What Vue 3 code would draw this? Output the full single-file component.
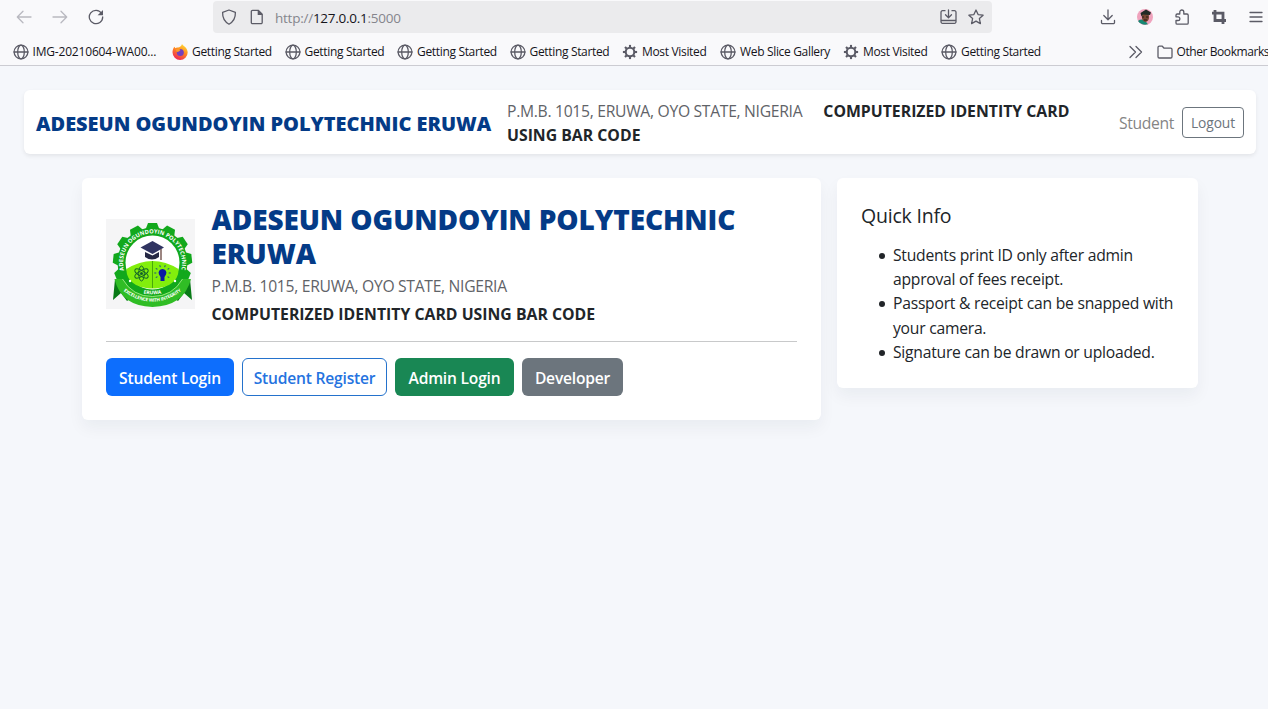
<script setup>
const bookmarks = [
  { x: 'b0', icon: 'globe', label: 'IMG-20210604-WA00...' },
  { x: 'b1', icon: 'fox', label: 'Getting Started' },
  { x: 'b2', icon: 'globe', label: 'Getting Started' },
  { x: 'b3', icon: 'globe', label: 'Getting Started' },
  { x: 'b4', icon: 'globe', label: 'Getting Started' },
  { x: 'b5', icon: 'gear', label: 'Most Visited' },
  { x: 'b6', icon: 'globe', label: 'Web Slice Gallery' },
  { x: 'b7', icon: 'gear', label: 'Most Visited' },
  { x: 'b8', icon: 'globe', label: 'Getting Started' },
]
const teeth = Array.from({ length: 11 }, (_, i) => (i - 5) * 28)
const rays = [-125, -90, -55, -20, 20, 55, 90, 125]
</script>

<template>
  <div class="page">
    <header class="chrome">
      <div class="toolbar">
        <svg class="ic nav back" viewBox="0 0 16 16"><path d="M15 8H1.500M7 2.200 1.300 8 7 13.800" /></svg>
        <svg class="ic nav fwd" viewBox="0 0 16 16"><path d="M1 8h13.500M9 2.200 14.700 8 9 13.800" /></svg>
        <svg class="ic reload" viewBox="0 0 16 16"><path d="M13.600 4.300A6.700 6.700 0 1 0 14.700 8" /><path class="fill" d="M15 1v5.200H9.600z" /></svg>
        <div class="urlbar">
          <svg class="ic" viewBox="0 0 16 16"><path d="M8 1 14.400 3.300C14.600 8.700 12.400 12.800 8 15.200 3.600 12.800 1.400 8.700 1.600 3.300z" /></svg>
          <svg class="ic doc" viewBox="0 0 16 16"><path d="M3.500 1.300h5.700l4 4v8.200a1.200 1.200 0 0 1-1.200 1.200H3.500a1.200 1.200 0 0 1-1.200-1.200v-11a1.200 1.200 0 0 1 1.200-1.200z" /><path class="fill" d="M8.700 1l5 5h-5z" /></svg>
          <span class="url">http://<b>127.0.0.1</b>:5000</span>
          <svg class="ic save" viewBox="0 0 17 16"><path d="M5 1.700H2.500A1.500 1.500 0 0 0 1 3.200v9.600a1.500 1.500 0 0 0 1.500 1.500h12a1.500 1.500 0 0 0 1.500-1.500V3.200a1.500 1.500 0 0 0-1.500-1.500H12M1 11.500h15M8.500 1v7.500M5.500 5.700l3 3 3-3" /></svg>
          <svg class="ic" viewBox="0 0 16 16"><path d="M8 1l2.100 4.600 5 .6-3.700 3.400 1 5L8 12.100l-4.400 2.500 1-5L.9 6.200l5-.6z" /></svg>
        </div>
        <div class="actions">
          <svg class="ic" viewBox="0 0 16 16"><path d="M8 1v9.500M3.800 6.500 8 10.700l4.200-4.200M1.500 11.500v2a1.200 1.200 0 0 0 1.200 1.200h10.600a1.200 1.200 0 0 0 1.200-1.200v-2" /></svg>
          <svg class="avatar" viewBox="0 0 16 16">
            <circle cx="8" cy="8" r="8" fill="#f0a3bd" />
            <path d="M1 12q5-4 10 3.300Q5 17 1 12" fill="#168873" />
            <ellipse cx="8.500" cy="8" rx="3.600" ry="5" fill="#764632" />
            <path d="M3.500 4 9 .5l5 3-1 2.500-7-.5-1.500 2z" fill="#222b26" />
            <path d="M5 8h2M9 8h2M7 11h3" stroke="#2b1c18" />
          </svg>
          <svg class="ic" viewBox="0 0 16 16"><path d="M2 7.800V6.200A1.200 1.200 0 0 1 3.200 5h2.600V3a2 2 0 0 1 4 0v2H13a1.200 1.200 0 0 1 1.200 1.200v7.800a1.200 1.200 0 0 1-1.200 1.200H3.200A1.200 1.200 0 0 1 2 14v-2.500h2a1.800 1.800 0 0 0 0-3.700z" /></svg>
          <svg class="ic crop" viewBox="0 0 16 16"><path d="M4 1v10.500h11M1 4.200h11V15" /></svg>
          <svg class="ic" viewBox="0 0 16 16"><path d="M2 3.500h12M2 8h12M2 12.500h12" /></svg>
        </div>
      </div>
      <nav class="bookmarks">
        <span v-for="b in bookmarks" :key="b.x" class="bm" :class="b.x">
          <svg v-if="b.icon === 'globe'" class="ic" viewBox="0 0 16 16"><circle cx="8" cy="8" r="6.900" /><ellipse cx="8" cy="8" rx="3.300" ry="6.900" /><path d="M1 8h14" /></svg>
          <svg v-else-if="b.icon === 'gear'" class="ic gear" viewBox="0 0 16 16"><circle cx="8" cy="8" r="4.300" /><path v-for="n in 8" :key="n" d="M8 3.400V.9" :transform="`rotate(${n * 45} 8 8)`" /></svg>
          <svg v-else class="fox" viewBox="0 0 16 16">
            <defs><linearGradient id="flame" x1=".8" y1="0" x2=".3" y2="1"><stop offset="0" stop-color="#ffe437" /><stop offset=".45" stop-color="#ff8a20" /><stop offset="1" stop-color="#ef2258" /></linearGradient></defs>
            <path fill="url(#flame)" d="M10 0c1 2 5.500 3.500 5.700 8.300A7.600 7.600 0 0 1 .5 8.300c0-2.300.8-4.300 2-5.600l.8 1.500C4 3.500 5 3.300 6 3.500 7.500 3.200 9.500 2.500 10 0z" />
            <circle cx="8.300" cy="8.500" r="3.500" fill="#7440bd" />
            <path d="M3.500 5.500q3-1.500 5 .5Q7 8 5 8z" fill="#ff9a25" />
          </svg>
          <span>{{ b.label }}</span>
        </span>
        <svg class="ic more" viewBox="0 0 16 16"><path d="M2 2.500 7.500 8 2 13.500M8 2.500 13.500 8 8 13.500" /></svg>
        <span class="bm other"><svg class="ic" viewBox="0 0 16 16"><path d="M1 12.700V3.500A1.300 1.300 0 0 1 2.300 2.200h3l1.800 2h6.600A1.300 1.300 0 0 1 15 5.500v7.200a1.300 1.300 0 0 1-1.300 1.300H2.300A1.300 1.300 0 0 1 1 12.700z" /></svg><span>Other Bookmarks</span></span>
      </nav>
    </header>

    <section class="navbar">
      <strong class="brand">ADESEUN OGUNDOYIN POLYTECHNIC ERUWA</strong>
      <div class="tagline"><span class="addr">P.M.B. 1015, ERUWA, OYO STATE, NIGERIA</span><b class="sub">COMPUTERIZED IDENTITY CARD</b><br /><b class="using">USING BAR CODE</b></div>
      <div class="account"><span class="role">Student</span><button class="logout">Logout</button></div>
    </section>

    <main class="content">
      <section class="card hero">
        <div class="intro">
          <svg class="logo" viewBox="0 0 89 90">
            <defs>
              <path id="ring" d="M18 51.500A29.500 29.500 0 1 1 75 51.500" />
              <path id="ribbon" d="M15 70Q46.500 95.500 78 70" />
              <path id="foot" d="M31 73.500Q46.500 77 62 73.500" />
            </defs>
            <rect width="89" height="90" fill="#f5f5f6" />
            <path d="M9 60 7 81l8-7 6 8 8-6zM84 60l2 21-8-7-6 8-8-6z" fill="#087a16" />
            <g fill="#12a81c">
              <circle cx="46.500" cy="43.500" r="35" />
              <path v-for="t in teeth" :key="t" d="M39.500 10.500 42 4h9l2.500 6.500z" :transform="`rotate(${t} 46.500 43.500)`" />
            </g>
            <circle cx="46.500" cy="43.500" r="27" fill="#fff" />
            <path d="M20.500 50Q46.500 34 72.500 50C73 63 61 69.500 46.500 69.500S20 63 20.500 50z" fill="#82ee0c" />
            <path d="M46.500 42v27" stroke="#48a90a" />
            <path d="M34.500 28.500 46.500 22l11.500 6.500L46.500 35z" fill="#303461" />
            <path d="M39 33v5q7 5 14 0v-5l-6.500 3.500z" fill="#252844" />
            <path d="M55 30v11" stroke="#5a352e" stroke-width="1.200" />
            <g fill="none" stroke="#12642a" stroke-width="1"><ellipse v-for="r in [0, 60, 120]" :key="r" cx="35.500" cy="54.500" rx="7.500" ry="2.800" :transform="`rotate(${r + 30} 35.500 54.500)`" /></g>
            <circle cx="35.500" cy="54.500" r="1.500" fill="#12642a" />
            <path d="M56.500 50a3.800 3.800 0 0 1 3.500 5.500l-1.500 2.500v4h-4v-4L53 55.500A3.800 3.800 0 0 1 56.500 50z" fill="#0b18a5" />
            <path v-for="r in rays" :key="r" d="M56.500 47.800v-2" stroke="#1d4f83" :transform="`rotate(${r} 56.500 54)`" />
            <path d="M8.500 60h8q10 17.500 30 17.500t30-17.500h8.500q-7 27-38.500 28Q15 87 8.500 60z" fill="#30bd25" />
            <path d="M16.500 60q10 17.500 30 17.500t30-17.500" fill="none" stroke="#b6f293" stroke-width=".8" />
            <circle cx="24" cy="62" r="1.200" fill="#fff" /><circle cx="69" cy="62" r="1.200" fill="#fff" />
            <text class="seal"><textPath href="#ring" textLength="107">ADESEUN OGUNDOYIN POLYTECHNIC</textPath></text>
            <text class="seal foot"><textPath href="#foot" startOffset="50%" text-anchor="middle">ERUWA</textPath></text>
            <text class="seal motto"><textPath href="#ribbon" startOffset="50%" text-anchor="middle" textLength="63">EXCELLENCE WITH INTEGRITY</textPath></text>
          </svg>
          <div class="titles">
            <h1><span>ADESEUN OGUNDOYIN POLYTECHNIC</span><br /><span>ERUWA</span></h1>
            <p class="addr">P.M.B. 1015, ERUWA, OYO STATE, NIGERIA</p>
            <p class="sub">COMPUTERIZED IDENTITY CARD USING BAR CODE</p>
          </div>
        </div>
        <hr />
        <div class="buttons">
          <button class="btn primary">Student Login</button>
          <button class="btn outline">Student Register</button>
          <button class="btn success">Admin Login</button>
          <button class="btn secondary">Developer</button>
        </div>
      </section>
      <aside class="card info">
        <h2>Quick Info</h2>
        <ul>
          <li>Students print ID only after admin<br />approval of fees receipt.</li>
          <li>Passport &amp; receipt can be snapped with<br />your camera.</li>
          <li>Signature can be drawn or uploaded.</li>
        </ul>
      </aside>
    </main>
  </div>
</template>

<style>
body { margin: 0; background: #f5f7fb; overflow: hidden; }
</style>
<style scoped>
* { box-sizing: border-box; }
.page { width: 1268px; height: 709px; overflow: hidden; background: #f5f7fb; color: #212529; font: 15.700px/24px "Open Sans", "Noto Sans", sans-serif; white-space: nowrap; }
.chrome { height: 66px; background: #f9f9fb; border-bottom: 1px solid #ccccd2; color: #15141a; }
.ic { width: 16px; height: 16px; flex: none; fill: none; stroke: #5b5b66; stroke-width: 1.3; stroke-linecap: round; stroke-linejoin: round; }
.ic .fill { fill: #5b5b66; stroke: none; }
.toolbar { display: flex; height: 34px; align-items: center; padding-left: 16px; }
.nav { stroke: #b9b9c0; }
.fwd { margin-left: 20px; }
.reload { margin-left: 20px; }
.urlbar { display: flex; align-items: center; width: 779px; height: 32px; margin: 0 0 0 109px; padding: 0 8px; background: #ebebed; border-radius: 4px; }
.doc { margin-left: 12px; }
.url { margin-left: 10px; padding-top: 1px; font-size: 13.500px; letter-spacing: -0.25px; color: #85858c; flex: 1; }
.url b { font-weight: 400; color: #15141a; }
.save { width: 17px; margin-right: 11px; }
.actions { display: flex; align-items: center; gap: 21px; margin-left: 108px; }
.avatar { width: 16px; height: 16px; flex: none; }
.crop { stroke-width: 2.800; stroke-linecap: butt; stroke-linejoin: miter; }
.bookmarks { display: flex; align-items: center; height: 31px; padding: 4px 0 0 12.500px; font-size: 12px; letter-spacing: -0.33px; }
.bm { display: flex; align-items: center; gap: 4px; flex: none; }
.b0 { width: 159.500px; letter-spacing: -0.18px; }
.b1, .b2, .b3, .b4 { width: 112.500px; }
.b5 { width: 98px; }
.b6 { width: 123px; }
.b7 { width: 98px; }
.b8 { width: 186.500px; }
.gear { stroke-width: 2.100; stroke-linecap: butt; }
.fox { width: 16px; height: 16px; }
.more { margin-right: 13px; }
.other { width: auto; letter-spacing: -0.42px; }
.navbar { display: flex; align-items: center; width: 1232px; height: 64px; margin: 24px 0 0 24px; padding: 2px 12px 0; background: #fff; border-radius: 6px; box-shadow: 0 2px 4px rgba(0, 0, 0, .075); }
.brand { width: 471px; padding-top: 1px; font-size: 19.970px; font-weight: 800; color: #043b87; }
.tagline { flex: 1; }
.addr { color: #5f6368; letter-spacing: -0.3px; }
.tagline .sub { margin-left: 21px; }
.sub, .using { font-size: 15.800px; }
.account { display: flex; align-items: center; gap: 8px; }
.role { color: #858585; letter-spacing: -0.35px; }
.logout { width: 62px; height: 31px; margin-top: -2px; padding: 1px 0 0; border: 1px solid #6c757d; border-radius: 4px; background: #fff; color: #6c757d; font: 13.800px "Open Sans", sans-serif; letter-spacing: -0.1px; }
.content { display: flex; align-items: flex-start; gap: 16px; margin: 24px 0 0 82px; }
.card { background: #fff; border-radius: 6px; box-shadow: 0 8px 16px rgba(20, 30, 50, .05); padding: 24px; }
.hero { width: 739px; height: 242px; }
.intro { display: flex; align-items: center; gap: 16.500px; height: 124px; }
.logo { width: 89px; height: 90px; flex: none; }
.seal { font: 700 5.700px "Open Sans", sans-serif; fill: #fff; }
.foot { font-size: 5px; }
.motto { font-size: 4.600px; }
h1, h2, p, ul { margin: 0; }
h1 { font-size: 28px; line-height: 34px; font-weight: 800; letter-spacing: -0.1px; color: #043b87; }
.titles .addr { margin-top: 4px; }
.titles .sub { margin-top: 4px; font-weight: 700; }
hr { height: 1px; margin: 15px 0 16px; border: 0; background: #c8c9ca; }
.buttons { display: flex; gap: 8px; }
.btn { height: 38px; padding: 2px 0 0; border: 1px solid transparent; border-radius: 6px; color: #fff; font: 600 15.600px "Open Sans", sans-serif; letter-spacing: -0.2px; }
.primary { width: 128px; background: #0d6efd; }
.outline { width: 145px; background: #fff; border-color: #2472cc; color: #2573e0; }
.success { width: 119px; background: #198754; }
.secondary { width: 101px; background: #6c757d; }
.info { width: 361px; height: 210px; }
h2 { font-size: 19.500px; line-height: 24px; font-weight: 400; letter-spacing: -0.2px; margin: 2px 0 15px; }
ul { padding-left: 32px; line-height: 24.200px; letter-spacing: -0.25px; list-style: none; }
li::before { content: ""; display: inline-block; width: 6px; height: 6px; margin: 0 8px 2px -14px; border-radius: 50%; background: #212529; }
</style>
